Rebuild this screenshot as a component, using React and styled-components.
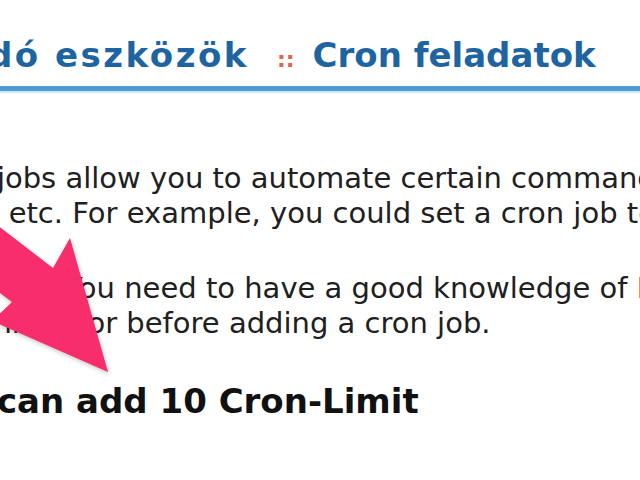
import React from "react";
import styled, { createGlobalStyle } from "styled-components";

const GlobalStyle = createGlobalStyle`
  html, body {
    margin: 0;
    padding: 0;
    background: #ffffff;
    overflow: hidden;
  }
`;

const Page = styled.div`
  position: relative;
  width: 640px;
  height: 480px;
  overflow: hidden;
  background: #ffffff;
  font-family: "DejaVu Sans", Verdana, sans-serif;
`;

const Header = styled.h1`
  margin: 0;
  padding-top: 35px;
  display: flex;
  align-items: baseline;
  white-space: nowrap;
  font-size: 34px;
  line-height: 40px;
  font-weight: bold;
  color: #1e64a0;
  margin-left: ${(p) => p.$indent}px;
`;

const Crumb = styled.span`
  margin-right: ${(p) => p.$gap || 0}px;
  letter-spacing: ${(p) => p.$spacing || 0}px;
`;

const Sep = styled.span`
  font-size: 22px;
  color: #e0664a;
  margin-right: 18px;
`;

const Rule = styled.div`
  margin-top: 6px;
  height: 5px;
  background: #4b9ad5;
  box-shadow: 0 2px 0 #d3e9f8;
`;

const Content = styled.div`
  padding-top: 70px;
  color: #202020;
`;

const Para = styled.div`
  margin-bottom: ${(p) => p.$after}px;
`;

const Line = styled.div`
  white-space: nowrap;
  font-size: 29px;
  line-height: 35px;
  margin-left: ${(p) => p.$indent}px;
`;

const Limit = styled.div`
  white-space: nowrap;
  font-size: 34px;
  line-height: 40px;
  font-weight: bold;
  color: #111111;
  margin-left: ${(p) => p.$indent}px;
`;

const ArrowLayer = styled.svg`
  position: absolute;
  left: 0;
  top: 0;
  width: 640px;
  height: 480px;
  pointer-events: none;
  filter: drop-shadow(1px 2px 2px rgba(0, 0, 0, 0.22));
`;

export default function App() {
  return (
    <>
      <GlobalStyle />
      <Page>
        <Header $indent={-108}>
          <Crumb $gap={28} $spacing={2.5}>Haladó eszközök</Crumb>
          <Sep>::</Sep>
          <Crumb>Cron feladatok</Crumb>
        </Header>
        <Rule />
        <Content>
          <Para $after={40}>
            <Line $indent={-80}>
              Cron jobs allow you to automate certain commands or scripts on your site.
            </Line>
            <Line $indent={-86}>
              week, etc. For example, you could set a cron job to delete temporary files.
            </Line>
          </Para>
          <Para $after={40}>
            <Line $indent={65}>You need to have a good knowledge of Linux commands.</Line>
            <Line $indent={-79}>administrator before adding a cron job.</Line>
          </Para>
          <Limit $indent={-84}>You can add 10 Cron-Limit</Limit>
        </Content>
        <ArrowLayer viewBox="0 0 640 480">
          <polygon
            points="-20,212 53,268 70,238 108,372 -8,321 12,302 -20,278"
            fill="#f82d6b"
          />
        </ArrowLayer>
      </Page>
    </>
  );
}
